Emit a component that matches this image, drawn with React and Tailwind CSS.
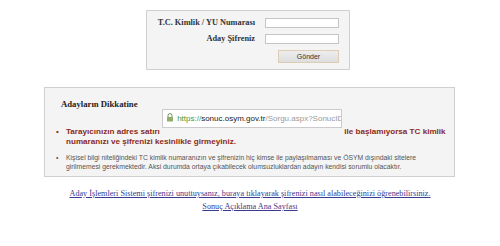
import React from 'react';

const serif = { fontFamily: '"Liberation Serif", "Times New Roman", serif' };

function LoginBox() {
  return (
    <div className="ml-[146px] mt-[10px] h-[60px] w-[204px] border border-[#cfcfcf] bg-[#f4f4f4] pt-[7px]">
      <div className="grid grid-cols-[108px_74px] items-center gap-x-[10px] gap-y-[6px]">
        <label className="text-right text-[8.3px] font-bold leading-[10px] text-[#333]" style={serif}>
          T.C. Kimlik / YU Numarası
        </label>
        <input type="text" className="h-[10px] w-[74px] border border-[#c4c4c4] bg-white" />
        <label className="text-right text-[8.3px] font-bold leading-[10px] text-[#333]" style={serif}>
          Aday Şifreniz
        </label>
        <input type="password" className="h-[10px] w-[74px] border border-[#c4c4c4] bg-white" />
        <div />
        <button
          type="button"
          className="ml-[13px] h-[13px] w-[61px] border border-[#dccdb4] bg-gradient-to-b from-[#eeeeee] to-[#dddddd] font-['Liberation_Sans',Arial,sans-serif] text-[7px] leading-[11px] text-[#333]"
        >
          Gönder
        </button>
      </div>
    </div>
  );
}

function UrlBar() {
  return (
    <span className="-mt-[16px] inline-block h-[19px] w-[180px] overflow-hidden whitespace-nowrap border border-[#cbcbcb] bg-white pl-[3px] align-[6px] text-[8px] font-normal leading-[17px]">
      <svg width="8" height="9" viewBox="0 0 8 9" className="mr-[3px] inline-block align-[-1px]">
        <path d="M2 4V2.6a2 2 0 0 1 4 0V4" fill="none" stroke="#6b8e4e" strokeWidth="1" />
        <rect x="1" y="4" width="6" height="4.5" rx="0.5" fill="#8fae6a" />
      </svg>
      <span className="text-[#3f9a3f]">https://</span>
      <span className="text-[#222]">sonuc.osym.gov.tr</span>
      <span className="text-[#9a9a9a]">/Sorgu.aspx?SonucID=</span>
    </span>
  );
}

function NoticeBox() {
  return (
    <div
      className="ml-[44px] mt-[17px] h-[90px] w-[411px] border border-[#cfcfcf] bg-[#f4f4f4] pl-[11px] pt-[10px]"
      style={{ fontFamily: '"Liberation Sans", Arial, sans-serif' }}
    >
      <h3 className="ml-[5px] text-[8.7px] font-bold leading-[12px] text-[#222]" style={serif}>
        Adayların Dikkatine
      </h3>
      <div className="mt-[15px] flex items-baseline text-[8.1px] font-bold leading-[10px] text-[#8a2b22]">
        <span className="w-[10px] shrink-0 font-normal">•</span>
        <p className="whitespace-nowrap">
          Tarayıcınızın adres satırı <UrlBar /> ile başlamıyorsa TC kimlik
          <br />
          numaranızı ve şifrenizi kesinlikle girmeyiniz.
        </p>
      </div>
      <div className="mt-[6px] flex items-baseline text-[6.8px] leading-[9px] text-[#555]">
        <span className="w-[10px] shrink-0">•</span>
        <p className="whitespace-nowrap">
          Kişisel bilgi niteliğindeki TC kimlik numaranızın ve şifrenizin hiç kimse ile paylaşılmaması ve ÖSYM dışındaki sitelere
          <br />
          girilmemesi gerekmektedir. Aksi durumda ortaya çıkabilecek olumsuzluklardan adayın kendisi sorumlu olacaktır.
        </p>
      </div>
    </div>
  );
}

export default function App() {
  return (
    <div className="h-[246px] w-[500px] overflow-hidden bg-white">
      <LoginBox />
      <NoticeBox />
      <div className="mt-[10px] text-center text-[8.2px] leading-[13px] text-[#3b3b8f]" style={serif}>
        <a href="#" className="underline">
          Aday İşlemleri Sistemi şifrenizi unuttuysanız, buraya tıklayarak şifrenizi nasıl alabileceğinizi öğrenebilirsiniz.
        </a>
        <br />
        <a href="#" className="underline">
          Sonuç Açıklama Ana Sayfası
        </a>
      </div>
    </div>
  );
}
